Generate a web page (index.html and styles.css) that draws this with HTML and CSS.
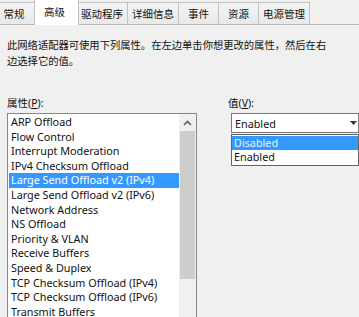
FILE: index.html
```html
<!DOCTYPE html>
<html lang="zh">
<head>
<meta charset="utf-8">
<link rel="stylesheet" href="styles.css">
</head>
<body>
<div class="tabs">
  <div class="tab first">常规</div>
  <div class="tab active">高级</div>
  <div class="tab">驱动程序</div>
  <div class="tab">详细信息</div>
  <div class="tab">事件</div>
  <div class="tab">资源</div>
  <div class="tab">电源管理</div>
</div>
<div class="panel">
  <p class="desc">此网络适配器可使用下列属性。在左边单击你想更改的属性，然后在右<br>边选择它的值。</p>
  <div class="cols">
    <div class="col-left">
      <div class="label">属性(<u>P</u>):</div>
      <div class="listbox">
        <ul class="items">
          <li>ARP Offload</li>
          <li>Flow Control</li>
          <li>Interrupt Moderation</li>
          <li>IPv4 Checksum Offload</li>
          <li class="sel">Large Send Offload v2 (IPv4)</li>
          <li>Large Send Offload v2 (IPv6)</li>
          <li>Network Address</li>
          <li>NS Offload</li>
          <li>Priority &amp; VLAN</li>
          <li>Receive Buffers</li>
          <li>Speed &amp; Duplex</li>
          <li>TCP Checksum Offload (IPv4)</li>
          <li>TCP Checksum Offload (IPv6)</li>
          <li>Transmit Buffers</li>
        </ul>
        <div class="scrollbar">
          <div class="arrow"><svg width="9" height="6" viewBox="0 0 9 6"><path d="M1 5 L4.5 1.5 L8 5" fill="none" stroke="#606060" stroke-width="1.6"/></svg></div>
          <div class="thumb"></div>
          <div class="track"></div>
        </div>
      </div>
    </div>
    <div class="col-right">
      <div class="label">值(<u>V</u>):</div>
      <div class="combo">
        <span class="combo-text">Enabled</span>
        <svg class="combo-arrow" width="7" height="4" viewBox="0 0 7 4"><path d="M0 0 H7 L3.5 4 Z" fill="#333"/></svg>
      </div>
      <ul class="dropdown">
        <li class="hl">Disabled</li>
        <li>Enabled</li>
      </ul>
    </div>
  </div>
</div>
</body>
</html>
```
FILE: styles.css
```css
* { box-sizing: border-box; }
html, body {
  margin: 0;
  padding: 0;
  width: 359px;
  height: 317px;
  overflow: hidden;
  background: #f0f0f0;
}
body {
  font-family: "Noto Sans", "Noto Sans CJK SC", sans-serif;
  font-size: 12px;
  color: #000;
}
.tabs {
  display: flex;
  align-items: flex-end;
  height: 25px;
  border-bottom: 1px solid #b9b9b9;
  background: #f0f0f0;
}
.tab {
  font-family: "Noto Sans CJK SC", sans-serif;
  font-size: 10.5px;
  height: 22px;
  line-height: 21px;
  min-width: 41px;
  padding: 0 4px;
  text-align: center;
  border: 1px solid #c2c2c2;
  border-bottom: none;
  margin-left: -1px;
  background: linear-gradient(#f4f4f4, #e9e9e9);
  color: #111;
}
.tab.first {
  margin-left: -8px;
  min-width: 44px;
}
.tab.active {
  background: #fff;
  height: 26px;
  line-height: 24px;
  margin: 0 -2px -1px -2px;
  position: relative;
  z-index: 1;
  min-width: 45px;
  padding: 0 10px 0 6px;
}
.panel {
  padding: 0 0 0 7px;
}
.desc {
  font-family: "Noto Sans CJK SC", sans-serif;
  font-size: 10.3px;
  line-height: 16px;
  margin: 12px 0 0 0;
  color: #111;
}
.cols {
  display: flex;
  margin-top: 28px;
}
.col-left {
  width: 190px;
  flex: none;
}
.col-right {
  margin-left: 31px;
  flex: 1;
}
.label {
  font-family: "Noto Sans", "Noto Sans CJK SC", sans-serif;
  font-size: 10.5px;
  height: 13px;
  line-height: 13px;
  color: #111;
}
.listbox {
  margin-top: 3px;
  height: 240px;
  border: 1px solid #828790;
  background: #fff;
  display: flex;
}
.items {
  list-style: none;
  margin: 0;
  padding: 1px 0 0 1px;
  flex: 1;
  overflow: hidden;
}
.items li {
  height: 14.6px;
  line-height: 14.6px;
  padding-left: 2px;
  white-space: nowrap;
  font-size: 10.8px;
  color: #111;
}
.items li.sel {
  background: #3399ff;
  color: #fff;
}
.scrollbar {
  width: 17px;
  flex: none;
  background: #f0f0f0;
  display: flex;
  flex-direction: column;
  align-items: center;
  padding: 0 1px;
}
.arrow {
  height: 17px;
  width: 100%;
  display: flex;
  align-items: center;
  justify-content: center;
}
.thumb {
  width: 100%;
  height: 148px;
  background: #cdcdcd;
}
.track {
  flex: 1;
}
.combo {
  margin-top: 3px;
  height: 20px;
  border: 1px solid #7a7a7a;
  background: #fff;
  display: flex;
  align-items: center;
  padding-left: 3px;
  margin-left: 3px;
}
.combo-text {
  font-size: 10.8px;
  flex: 1;
  color: #111;
}
.combo-arrow {
  position: relative;
  left: -1px;
}
.dropdown {
  list-style: none;
  margin: 1px 0 0 3px;
  padding: 1px 0;
  border: 1px solid #646464;
  background: #fff;
}
.dropdown li {
  height: 14px;
  line-height: 14px;
  padding-left: 2px;
  font-size: 10.8px;
  color: #111;
}
.dropdown li.hl {
  background: #3399ff;
  color: #e4f1ff;
}
```
